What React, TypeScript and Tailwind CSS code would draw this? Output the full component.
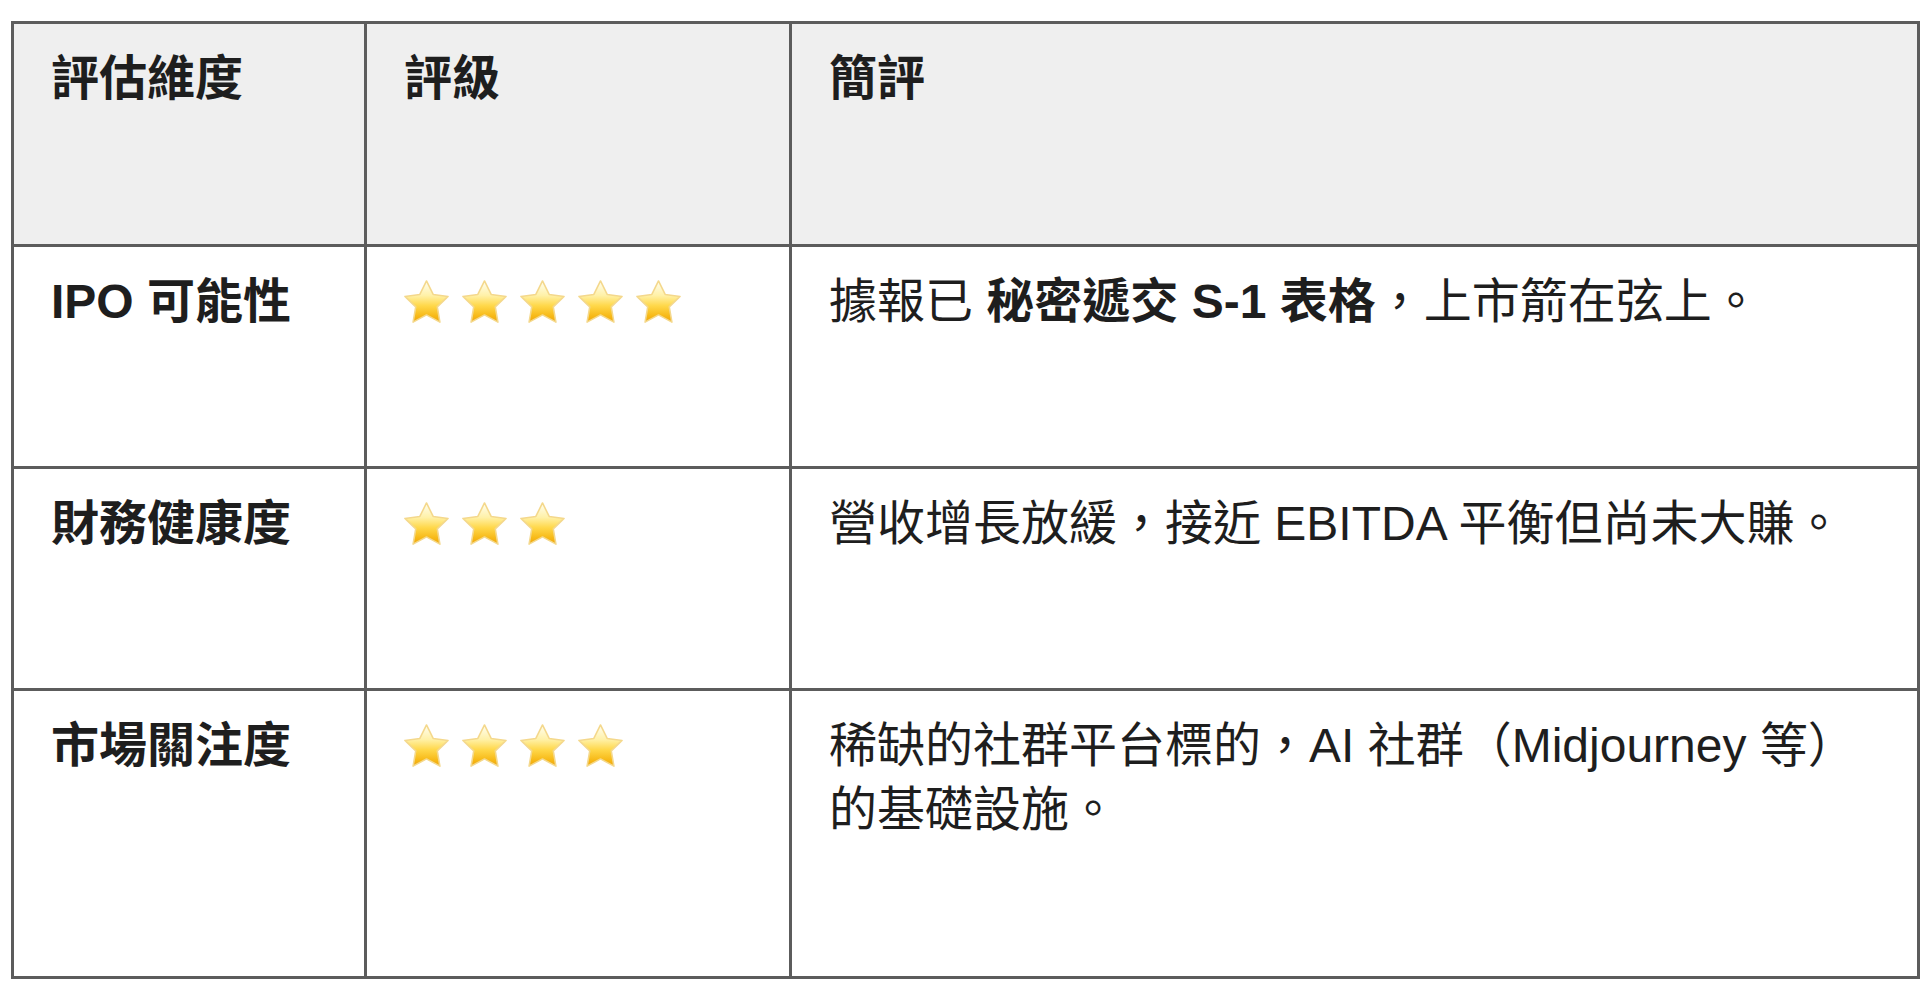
import React from "react";

const font = { fontFamily: '"Liberation Sans", "Noto Sans CJK TC", sans-serif' };

function Star({ id }: { id: string }) {
  return (
    <svg width="47" height="46" viewBox="0 0 48 46" className="shrink-0">
      <defs>
        <linearGradient id={id} x1="0" y1="0" x2="0" y2="1">
          <stop offset="0%" stopColor="#fffef2" />
          <stop offset="35%" stopColor="#fff1a8" />
          <stop offset="60%" stopColor="#ffd84a" />
          <stop offset="85%" stopColor="#f7b917" />
          <stop offset="100%" stopColor="#eea40c" />
        </linearGradient>
      </defs>
      <path
        d="M24 1.5 L30.8 15.3 L46 17.3 L35 28 L37.7 43.6 L24 36.2 L10.3 43.6 L13 28 L2 17.3 L17.2 15.3 Z"
        fill={`url(#${id})`}
        stroke="#f4d88c"
        strokeWidth="1.6"
        strokeLinejoin="round"
      />
    </svg>
  );
}

function Stars({ n, row }: { n: number; row: number }) {
  return (
    <div className="flex items-center gap-[11px] h-[64px] -ml-[1px]">
      {Array.from({ length: n }).map((_, i) => (
        <Star key={i} id={`g-${row}-${i}`} />
      ))}
    </div>
  );
}

const cell =
  "border-[3px] border-[#5c5c5c] align-top pl-[37px] pr-[20px] pt-[23px] text-[48px] leading-[64px] text-[#1e1e1e]";

export default function App() {
  return (
    <div className="w-[1920px] h-[990px] bg-white overflow-hidden" style={font}>
      <table className="ml-[11px] mt-[21px] border-collapse table-fixed w-[1906px]">
        <colgroup>
          <col className="w-[353px]" />
          <col className="w-[425px]" />
          <col className="w-[1128px]" />
        </colgroup>
        <tbody>
          <tr className="h-[223px] bg-[#efefef]">
            <td className={`${cell} font-bold`}>評估維度</td>
            <td className={`${cell} font-bold`}>評級</td>
            <td className={`${cell} font-bold`}>簡評</td>
          </tr>
          <tr className="h-[222px]">
            <td className={`${cell} font-bold`}>IPO 可能性</td>
            <td className={cell}>
              <Stars n={5} row={1} />
            </td>
            <td className={cell}>
              據報已 <span className="font-bold">秘密遞交 S-1 表格</span>，上市箭在弦上。
            </td>
          </tr>
          <tr className="h-[222px]">
            <td className={`${cell} font-bold`}>財務健康度</td>
            <td className={cell}>
              <Stars n={3} row={2} />
            </td>
            <td className={cell}>營收增長放緩，接近 EBITDA 平衡但尚未大賺。</td>
          </tr>
          <tr className="h-[288px]">
            <td className={`${cell} font-bold`}>市場關注度</td>
            <td className={cell}>
              <Stars n={4} row={3} />
            </td>
            <td className={`${cell} whitespace-nowrap`}>
              稀缺的社群平台標的，AI 社群（Midjourney 等）
              <br />
              的基礎設施。
            </td>
          </tr>
        </tbody>
      </table>
    </div>
  );
}
